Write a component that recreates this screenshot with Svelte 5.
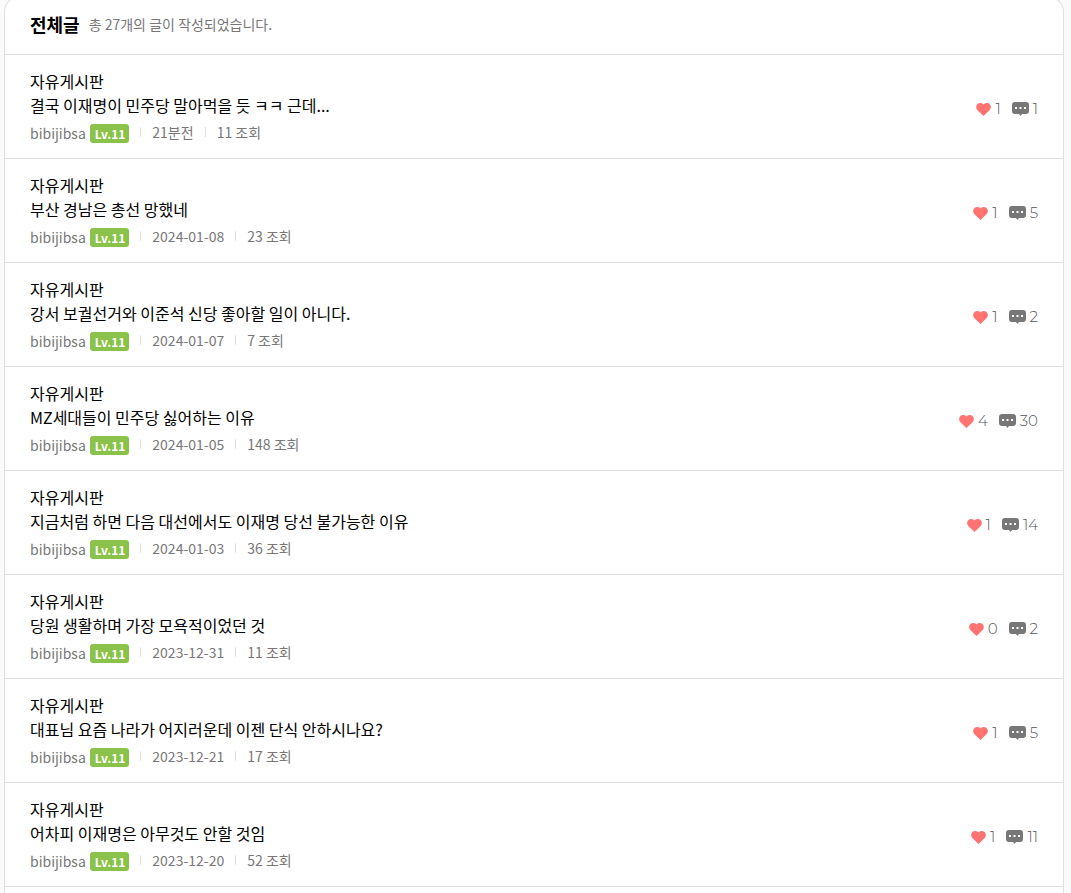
<script lang="ts">
  type Post = {
    id: number;
    title: string;
    date: string;
    views: number;
    likes: number;
    comments: number;
  };

  const total = 27;
  const board = "자유게시판";
  const author = "bibijibsa";
  const level = 11;

  const posts: Post[] = [
    { id: 27, title: "결국 이재명이 민주당 말아먹을 듯 ㅋㅋ 근데...", date: "21분전", views: 11, likes: 1, comments: 1 },
    { id: 26, title: "부산 경남은 총선 망했네", date: "2024-01-08", views: 23, likes: 1, comments: 5 },
    { id: 25, title: "강서 보궐선거와 이준석 신당 좋아할 일이 아니다.", date: "2024-01-07", views: 7, likes: 1, comments: 2 },
    { id: 24, title: "MZ세대들이 민주당 싫어하는 이유", date: "2024-01-05", views: 148, likes: 4, comments: 30 },
    { id: 23, title: "지금처럼 하면 다음 대선에서도 이재명 당선 불가능한 이유", date: "2024-01-03", views: 36, likes: 1, comments: 14 },
    { id: 22, title: "당원 생활하며 가장 모욕적이었던 것", date: "2023-12-31", views: 11, likes: 0, comments: 2 },
    { id: 21, title: "대표님 요즘 나라가 어지러운데 이젠 단식 안하시나요?", date: "2023-12-21", views: 17, likes: 1, comments: 5 },
    { id: 20, title: "어차피 이재명은 아무것도 안할 것임", date: "2023-12-20", views: 52, likes: 1, comments: 11 },
  ];
</script>

<main class="card">
  <header>
    <h1>전체글</h1>
    <p>총 {total}개의 글이 작성되었습니다.</p>
  </header>

  <ul>
    {#each posts as post (post.id)}
      <li>
        <div class="body">
          <a class="board" href="#board">{board}</a>
          <a class="title" href="#post-{post.id}">{post.title}</a>
          <div class="meta">
            <span class="author">{author}</span>
            <span class="level">Lv.{level}</span>
            <span class="info">{post.date}</span>
            <span class="info">{post.views} 조회</span>
          </div>
        </div>
        <div class="counts">
          <span class="likes">
            <svg width="15" height="13" viewBox="0 0 15 13" aria-hidden="true">
              <path d="M7.500 13 1.500 7.200C-.2 5.500-.3 2.900 1.200 1.300 2.900-.4 5.900-.3 7.500 1.600 9.100-.3 12.100-.4 13.800 1.300 15.300 2.900 15.200 5.500 13.500 7.200Z" />
            </svg>
            {post.likes}
          </span>
          <span class="comments">
            <svg width="17" height="14" viewBox="0 0 17 14" aria-hidden="true">
              <path d="M3 0h11q3 0 3 3v6q0 3-3 3h-4l-1.500 2L7 12H3q-3 0-3-3V3q0-3 3-3Z" />
              <path class="dots" d="M3 5h2v2H3zM7.500 5h2v2h-2zM12 5h2v2h-2z" />
            </svg>
            {post.comments}
          </span>
        </div>
      </li>
    {/each}
  </ul>
</main>

<style>
  :global(body) {
    background: #fafafa;
    font-family: "Noto Sans CJK KR", sans-serif;
    color: #000;
  }

  .card {
    margin: -4px 7px 0 4px;
    padding-bottom: 24px;
    background: #fff;
    border: 1px solid #e1e1e1;
    border-bottom: 0;
    border-radius: 16px 16px 0 0;
  }

  header {
    display: flex;
    align-items: center;
    gap: 9px;
    padding: 15px 25px 18px;
    border-bottom: 1px solid #e1e1e1;
  }

  h1 {
    margin: 0;
    font-size: 18px;
    line-height: 24px;
    font-weight: 700;
  }

  p {
    margin: 0;
    font-size: 14px;
    line-height: 24px;
    color: #777;
  }

  ul {
    margin: 0;
    padding: 0;
    list-style: none;
  }

  li {
    display: flex;
    align-items: center;
    justify-content: space-between;
    padding: 14px 25px 13px;
    border-bottom: 1px solid #e1e1e1;
  }

  a {
    color: inherit;
    text-decoration: none;
  }

  .board,
  .title {
    display: block;
    font-size: 16px;
    line-height: 24px;
  }

  .meta {
    display: flex;
    align-items: center;
    height: 28px;
    font-size: 14px;
    color: #777;
  }

  .author,
  .level {
    margin-top: 4px;
  }

  .level {
    margin-left: 4px;
    padding: 0 4px 0 5px;
    border-radius: 3px;
    background: #8bc34a;
    color: #fff;
    font-size: 12px;
    line-height: 19px;
    font-weight: 700;
  }

  .info {
    display: flex;
    align-items: center;
    margin-top: 2px;
    line-height: 24px;
  }

  .info::before {
    content: "";
    width: 1px;
    height: 10px;
    margin: 0 11px;
    background: #e1e1e1;
  }

  .counts {
    display: flex;
    gap: 11px;
    padding-top: 4px;
    font-family: Montserrat, Lato, sans-serif;
    font-size: 15px;
    line-height: 24px;
    font-weight: 300;
    color: #555;
  }

  .likes,
  .comments {
    display: flex;
    align-items: center;
    gap: 4px;
  }

  .likes svg {
    fill: #ff7473;
  }

  .comments svg {
    fill: #777;
  }

  .comments .dots {
    fill: #fff;
  }
</style>
